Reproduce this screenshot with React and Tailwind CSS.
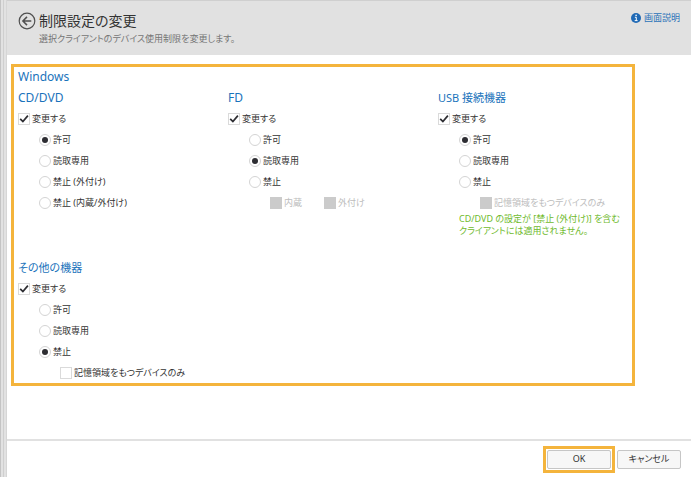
import React, { useId, useState } from 'react';

const Heading = ({ children, latin = false }) => (
  <h3 className={`h-5 leading-5 text-[#1a73bb] ${latin ? 'text-xs/5' : 'text-[11px]/5'}`}>{children}</h3>
);

const CheckBox = ({ label, initial = false, disabled = false }) => {
  const [checked, setChecked] = useState(initial);

  return (
    <label className={`flex h-[21px] items-center gap-[2px] ${disabled ? 'text-[#bdbdbd]' : 'text-[#333]'}`}>
      <span className="grid">
        <input
          type="checkbox"
          checked={checked}
          disabled={disabled}
          onChange={(e) => setChecked(e.target.checked)}
          className="col-start-1 row-start-1 h-3 w-3 appearance-none border border-[#dadada] bg-white disabled:border-[#cbcbcb] disabled:bg-[#cbcbcb]"
        />
        {checked && (
          <svg viewBox="0 0 12 12" className="pointer-events-none col-start-1 row-start-1 h-3 w-3" fill="none" stroke="#2d2d32" strokeWidth="1.7">
            <path d="M2.2 5.8 L4.9 8.6 L9.9 2.6" />
          </svg>
        )}
      </span>
      <span className="whitespace-nowrap">{label}</span>
    </label>
  );
};

const RadioGroup = ({ label, options, initial }) => {
  const name = useId();
  const [value, setValue] = useState(initial);

  return (
    <div role="radiogroup" aria-label={label} className="pl-[21px]">
      {options.map((option) => (
        <label key={option} className="flex h-[21px] items-center gap-[2px]">
          <span className="grid place-items-center">
            <input
              type="radio"
              name={name}
              checked={value === option}
              onChange={() => setValue(option)}
              className="col-start-1 row-start-1 h-3 w-3 appearance-none rounded-full border border-[#d4d4d4] bg-white"
            />
            {value === option && (
              <span className="pointer-events-none col-start-1 row-start-1 h-[6px] w-[6px] rounded-full bg-[#2d2d32]" />
            )}
          </span>
          <span className="whitespace-nowrap">{option}</span>
        </label>
      ))}
    </div>
  );
};

const DeviceSection = ({ title, latin, options, initial, children }) => (
  <section>
    <Heading latin={latin}>{title}</Heading>
    <CheckBox label="変更する" initial />
    <RadioGroup label={title} options={options} initial={initial} />
    {children}
  </section>
);

const App = () => {
  return (
    <div className="flex min-h-screen bg-white font-['Noto_Sans','Noto_Sans_CJK_JP',sans-serif] text-[9px] text-[#333] [font-feature-settings:'palt']">
      {/* Splitter */}
      <div className="flex w-[7px] shrink-0 border-r border-[#d6d6d6] bg-[#e2e2e2]">
        <div className="w-px bg-[#c4c4c4]" />
        <div className="ml-[2px] w-px bg-[#cfcfcf]" />
      </div>

      <div className="flex min-w-0 flex-1 flex-col">
        {/* Header */}
        <header className="flex h-[55px] justify-between border-t border-[#cfcfcf] bg-[#e1e1e1] pr-[11px] pl-[11px]">
          <div className="flex gap-[3px] pt-[10px]">
            <button type="button" aria-label="戻る" className="mt-px h-[18px] w-[18px]">
              <svg viewBox="0 0 18 18" className="h-[18px] w-[18px]" fill="none" stroke="#505050">
                <circle cx="9" cy="9" r="7.8" strokeWidth="1.2" />
                <path d="M13.3 9 H5 M9 4.9 L4.9 9 L9 13.1" strokeWidth="1.5" />
              </svg>
            </button>
            <div>
              <h1 className="text-sm/5 text-[#333]">制限設定の変更</h1>
              <p className="text-[9px] leading-4 text-[#757575]">選択クライアントのデバイス使用制限を変更します。</p>
            </div>
          </div>
          <a href="#help" className="mt-[11px] flex h-3 items-center gap-[3px] text-[9px] leading-3 text-[#2a72b8]">
            <svg viewBox="0 0 10 10" className="h-[10px] w-[10px]">
              <circle cx="5" cy="5" r="5" fill="#1f69b5" />
              <path d="M3.9 4.3 H5.3 V7.5 M3.7 7.6 H6.6" stroke="#fff" strokeWidth="1" fill="none" />
              <circle cx="5.1" cy="2.4" r="0.8" fill="#fff" />
            </svg>
            画面説明
          </a>
        </header>

        {/* Device settings */}
        <main className="flex-1 pt-[9px] pr-14 pl-1">
          <div className="border-3 border-[#f4b43c] px-1">
            <h2 className="h-[21px] text-xs/5 text-[#1a73bb]">Windows</h2>
            <div className="grid grid-cols-[210px_210px_1fr] gap-y-[21px]">
              <DeviceSection
                title="CD/DVD"
                latin
                options={['許可', '読取専用', '禁止 (外付け)', '禁止 (内蔵/外付け)']}
                initial="許可"
              />
              <DeviceSection title="FD" latin options={['許可', '読取専用', '禁止']} initial="読取専用">
                <div className="flex gap-[22px] pl-[42px]">
                  <CheckBox label="内蔵" disabled />
                  <CheckBox label="外付け" disabled />
                </div>
              </DeviceSection>
              <DeviceSection title="USB 接続機器" options={['許可', '読取専用', '禁止']} initial="許可">
                <div className="pl-[42px]">
                  <CheckBox label="記憶領域をもつデバイスのみ" disabled />
                </div>
                <p className="pl-[21px] leading-3 whitespace-nowrap text-[#6fba2c]">
                  CD/DVD の設定が [禁止 (外付け)] を含む
                  <br />
                  クライアントには適用されません。
                </p>
              </DeviceSection>
              <DeviceSection title="その他の機器" options={['許可', '読取専用', '禁止']} initial="禁止">
                <div className="pl-[42px]">
                  <CheckBox label="記憶領域をもつデバイスのみ" />
                </div>
              </DeviceSection>
            </div>
          </div>
        </main>

        {/* Footer */}
        <footer className="flex h-[38px] items-center justify-end gap-[2px] border-t-2 border-[#e1e1e1] pr-[10px]">
          <div className="border-3 border-[#f4b43c] p-px">
            <button type="button" className="block h-[19px] w-16 rounded-xs border border-[#c6c6c6] bg-[#f7f7f7] leading-4">
              OK
            </button>
          </div>
          <button type="button" className="h-[19px] w-16 rounded-xs border border-[#c6c6c6] bg-[#f7f7f7] leading-4">
            キャンセル
          </button>
        </footer>
      </div>
    </div>
  );
};

export default App;
